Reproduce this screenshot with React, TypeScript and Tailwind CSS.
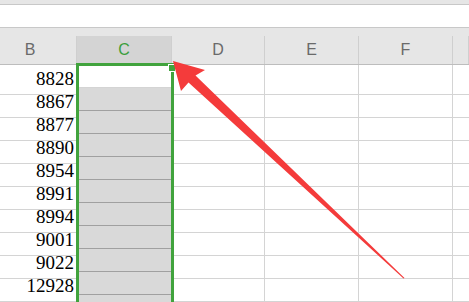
import React from "react";

const values = ["8828", "8867", "8877", "8890", "8954", "8991", "8994", "9001", "9022", "12928", "13046"];
const columns = ["B", "C", "D", "E", "F", ""];

const App = () => {
  return (
    <div className="relative w-[469px] h-[302px] overflow-hidden bg-white" style={{ fontFamily: '"Liberation Sans", Arial, sans-serif' }}>
      {/* toolbar strips */}
      <div className="h-[4px] bg-[#e6e6e6]" />
      <div className="h-[1px] bg-[#c8c8c8]" />
      <div className="h-[22px] bg-white" />
      <div className="h-[1px] bg-[#c8c8c8]" />
      <div className="h-[8px] bg-[#e6e6e6]" />

      {/* column headers */}
      <div className="grid grid-cols-[77px_95px_93px_94px_94px_1fr] h-[29px] bg-[#e6e6e6] border-b border-[#bdbdbd]">
        {columns.map((c, i) => (
          <div
            key={i}
            className={
              "flex items-center justify-center text-[16px] border-r border-[#cfcfcf] " +
              (c === "C" ? "bg-[#d4d4d4] text-[#3c9e3c]" : "text-[#6a6a6a]")
            }
          >
            {c === "B" ? <span className="ml-[-16px]">B</span> : c}
          </div>
        ))}
      </div>

      {/* rows */}
      {values.map((v, r) => (
        <div key={v} className="grid grid-cols-[77px_95px_93px_94px_94px_1fr] h-[23px]">
          <div className="flex items-center justify-end pr-[3px] border-b border-[#d4d4d4] text-[19px] text-black" style={{ fontFamily: '"Liberation Serif", "Times New Roman", serif' }}>
            {v}
          </div>
          <div className="flex flex-col">
            <div className={r === 0 ? "h-[22px] bg-white" : "h-[22px] bg-[#d9d9d9]"} />
            <div className={r === 0 ? "h-[1px] bg-[#d4d4d4]" : "h-[1px] bg-[#a0a0a0]"} />
          </div>
          <div className="border-b border-r border-[#d4d4d4]" />
          <div className="border-b border-r border-[#d4d4d4]" />
          <div className="border-b border-r border-[#d4d4d4]" />
          <div className="border-b border-[#d4d4d4]" />
        </div>
      ))}

      {/* selection around column C */}
      <div className="absolute left-[76px] top-[63px] w-[98px] h-[260px] border-[3px] border-[#41a33d]" />
      <div className="absolute left-[168px] top-[64px] w-[8px] h-[8px] bg-white" />
      <div className="absolute left-[169px] top-[65px] w-[6px] h-[6px] bg-[#41a33d]" />

      {/* red arrow */}
      <svg className="absolute left-0 top-0" width="469" height="302" viewBox="0 0 469 302">
        <polygon
          points="173,61 205,70 195.5,75.5 404.5,278 403.5,278.5 188.5,82.5 181,91"
          fill="#f43b3b"
        />
      </svg>
    </div>
  );
};

export default App;
